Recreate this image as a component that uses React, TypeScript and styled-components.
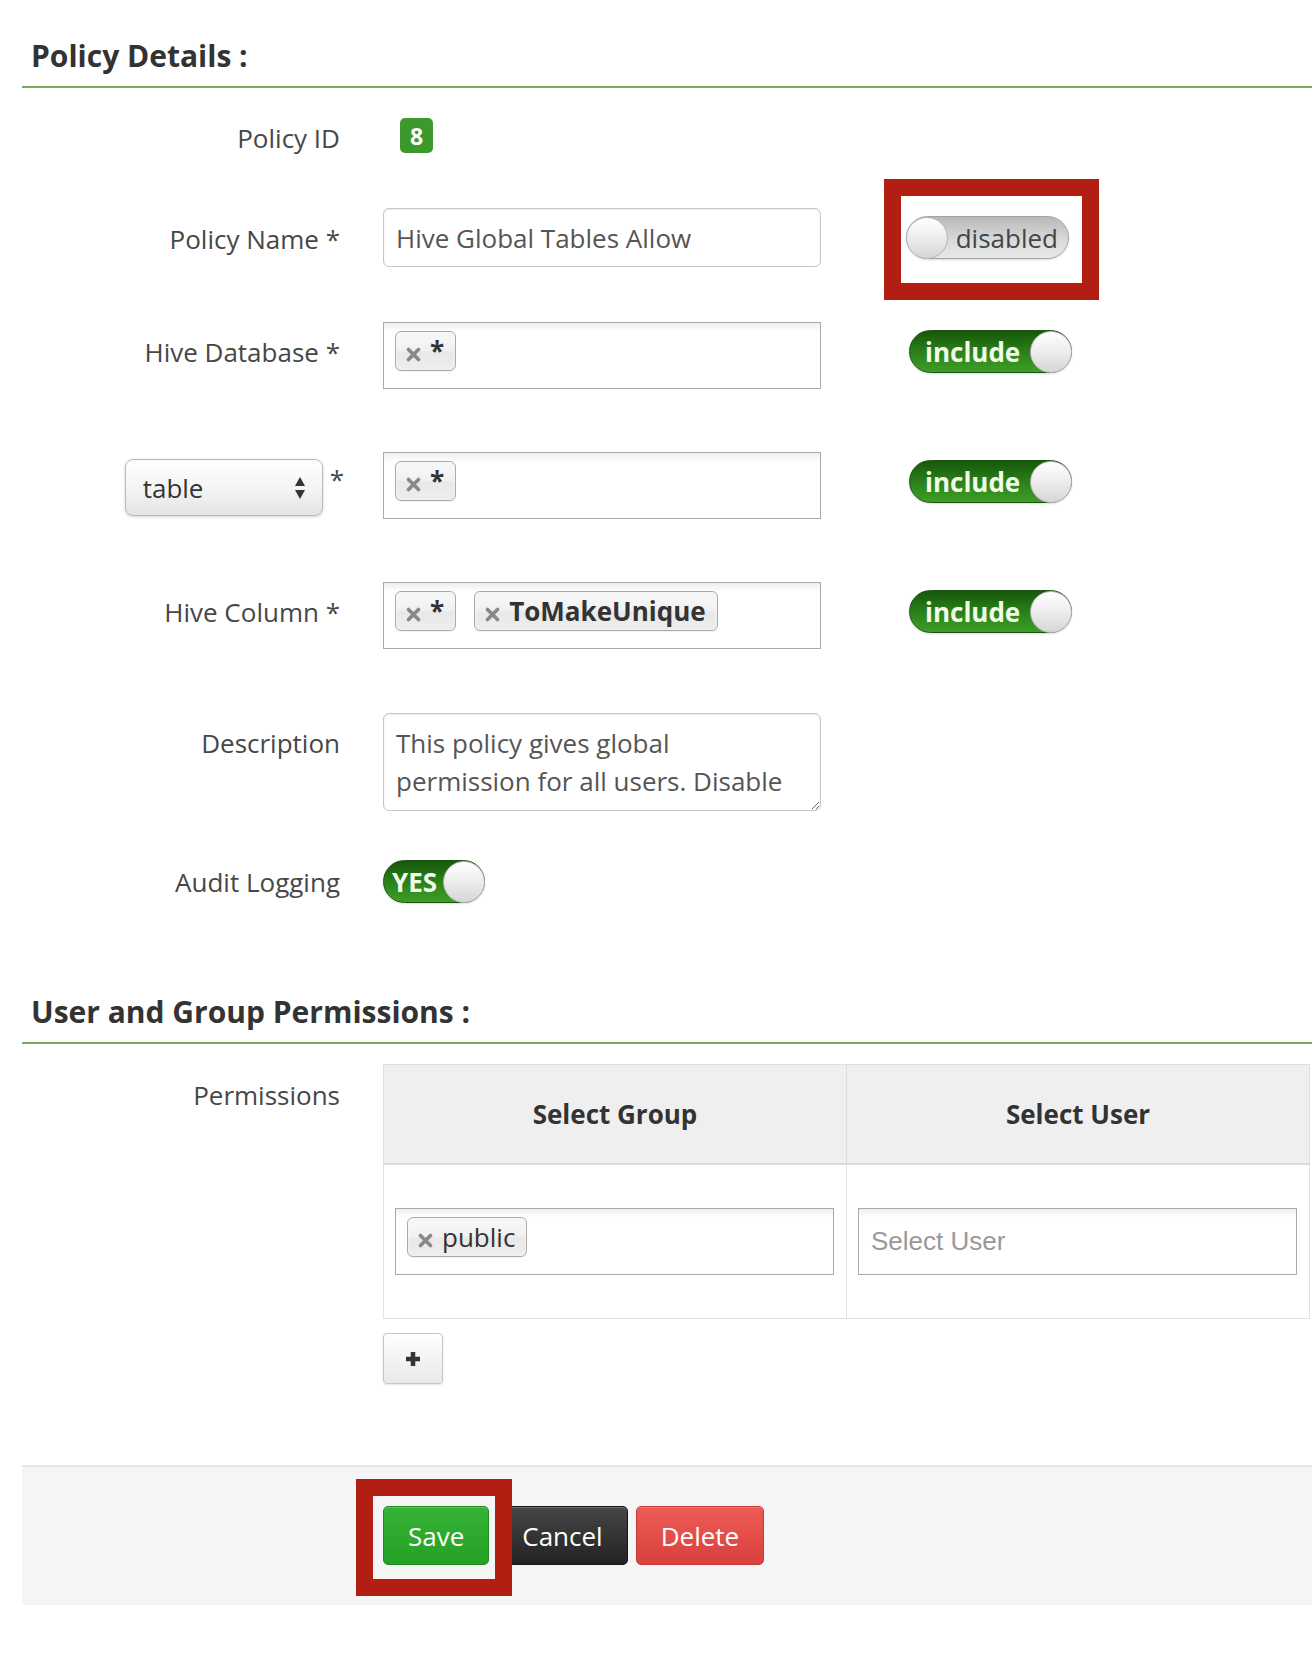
import React from "react";
import styled, { createGlobalStyle } from "styled-components";

const GlobalStyle = createGlobalStyle`
  html, body { margin: 0; padding: 0; background: #fff; }
  body {
    font-family: "Open Sans", "Noto Sans", sans-serif;
    color: #4a4a4a;
    overflow: hidden;
  }
  * { box-sizing: border-box; }
`;

const Page = styled.div`
  width: 1312px;
  min-height: 1658px;
  padding-left: 22px;
  overflow: hidden;
`;

const SectionTitle = styled.h2<{ $top: number }>`
  margin: ${(p) => p.$top}px 0 0;
  padding: 0 0 10px 9px;
  font-size: 30px;
  line-height: 40px;
  font-weight: 700;
  color: #333;
  border-bottom: 2px solid #7aab5c;
`;

const Row = styled.div<{ $mt: number; $center?: boolean }>`
  display: grid;
  grid-template-columns: 318px 438px auto;
  column-gap: 43px;
  margin-top: ${(p) => p.$mt}px;
  align-items: ${(p) => (p.$center ? "center" : "start")};
`;

const WideRow = styled.div<{ $mt: number }>`
  display: grid;
  grid-template-columns: 318px auto;
  column-gap: 43px;
  margin-top: ${(p) => p.$mt}px;
  align-items: start;
`;

const Label = styled.label<{ $pt?: number }>`
  display: block;
  text-align: right;
  font-size: 26px;
  line-height: 40px;
  color: #474747;
  padding-top: ${(p) => (p.$pt === undefined ? 10 : p.$pt)}px;
`;

const LabelCell = styled.div`
  display: flex;
  justify-content: flex-end;
  align-items: flex-start;
  padding-top: 7px;
  margin-right: -4px;
`;

const Star = styled.span`
  font-size: 26px;
  line-height: 40px;
  margin-left: 7px;
  color: #474747;
`;

const Badge = styled.span`
  display: inline-flex;
  align-items: center;
  justify-content: center;
  width: 33px;
  height: 35px;
  margin-left: 17px;
  background: #3c9a2d;
  color: #fff;
  font-weight: 700;
  font-size: 23px;
  border-radius: 5px;
`;

const TextInput = styled.input`
  width: 438px;
  height: 59px;
  border: 1px solid #c6c6c6;
  border-radius: 6px;
  padding: 0 12px;
  font-family: inherit;
  font-size: 26px;
  color: #555;
  background: #fff;
  box-shadow: inset 0 1px 2px rgba(0, 0, 0, 0.08);
  outline: none;
`;

const TagBox = styled.div<{ $w?: number }>`
  width: ${(p) => p.$w ?? 438}px;
  height: 67px;
  border: 1px solid #aaa;
  padding: 8px 11px;
  display: flex;
  gap: 18px;
  align-items: flex-start;
  background: linear-gradient(#eee 0%, #fff 14%);
`;

const Tag = styled.span<{ $bold?: boolean }>`
  display: inline-flex;
  align-items: center;
  height: 40px;
  padding: 0 11px 0 10px;
  gap: 9px;
  border: 1px solid #aaa;
  border-radius: 6px;
  background: linear-gradient(#f6f6f6 20%, #f0f0f0 50%, #e8e8e8 52%, #eee 100%);
  box-shadow: inset 0 0 2px #fff, 0 1px 0 rgba(0, 0, 0, 0.05);
  font-size: 26px;
  font-weight: ${(p) => (p.$bold ? 700 : 400)};
  color: #333;
  line-height: 40px;
`;

const TagX = styled.svg`
  width: 15px;
  height: 15px;
  margin-top: 7px;
  flex: none;
`;

const Placeholder = styled.span`
  font-family: "Liberation Sans", Arial, sans-serif;
  font-size: 26px;
  color: #999;
  line-height: 49px;
  padding-left: 1px;
`;

const ToggleCol = styled.div<{ $shift?: number }>`
  padding-left: ${(p) => 42 + (p.$shift ?? 0)}px;
  padding-top: 8px;
`;

const Annotated = styled.div`
  position: relative;
  display: inline-block;
`;

const RedBox = styled.div<{ $t: number; $l: number; $w: number; $h: number }>`
  position: absolute;
  top: ${(p) => p.$t}px;
  left: ${(p) => p.$l}px;
  width: ${(p) => p.$w}px;
  height: ${(p) => p.$h}px;
  border: 17px solid #b21e12;
  pointer-events: none;
`;

const Toggle = styled.div<{ $on: boolean; $w: number; $pl?: number }>`
  display: flex;
  align-items: center;
  justify-content: space-between;
  width: ${(p) => p.$w}px;
  height: 43px;
  border-radius: 22px;
  padding: ${(p) => (p.$on ? `0 0 0 ${p.$pl ?? 13}px` : "0 10px 0 0")};
  background: ${(p) =>
    p.$on
      ? "linear-gradient(#17570c, #2a8019 50%, #3d9e25)"
      : "linear-gradient(#b9b9b9, #d9d9d9 55%, #e9e9e9)"};
  border: 1px solid ${(p) => (p.$on ? "#1d5414" : "#a3a3a3")};
  box-shadow: 0 1px 2px rgba(0, 0, 0, 0.15);
  font-size: 26px;
  font-weight: ${(p) => (p.$on ? 700 : 400)};
  color: ${(p) => (p.$on ? "#f1fbe9" : "#444")};
  line-height: 1;
`;

const Knob = styled.span`
  width: 42px;
  height: 42px;
  margin: -1px;
  border-radius: 50%;
  background: linear-gradient(#ffffff, #ececec 50%, #d6d6d6);
  border: 1px solid #b5b5b5;
  flex: none;
`;

const Description = styled.textarea`
  width: 438px;
  height: 98px;
  border: 1px solid #c6c6c6;
  border-radius: 6px;
  padding: 10px 12px;
  font-family: inherit;
  font-size: 26px;
  line-height: 38px;
  color: #555;
  overflow: hidden;
  outline: none;
  box-shadow: inset 0 1px 2px rgba(0, 0, 0, 0.08);
`;

const SelectBox = styled.div`
  width: 198px;
  height: 57px;
  border: 1px solid #b9b9b9;
  border-radius: 8px;
  background: linear-gradient(#ffffff, #f3f3f3 55%, #e4e4e4);
  box-shadow: 0 1px 3px rgba(0, 0, 0, 0.18);
  display: flex;
  align-items: center;
  justify-content: space-between;
  padding: 0 16px 0 17px;
  font-size: 26px;
  color: #333;
`;

const Table = styled.table`
  border-collapse: collapse;
  width: 927px;
`;

const Th = styled.th`
  height: 99px;
  width: 50%;
  background: #efefef;
  border: 1px solid #dedede;
  border-bottom: 2px solid #dadada;
  font-size: 26px;
  font-weight: 700;
  color: #333;
  text-align: center;
`;

const Td = styled.td`
  height: 155px;
  border: 1px solid #e2e2e2;
  padding: 0 11px;
  vertical-align: middle;
`;

const AddButton = styled.button`
  display: flex;
  align-items: center;
  justify-content: center;
  width: 60px;
  height: 51px;
  margin-top: 14px;
  border: 1px solid #c6c6c6;
  border-radius: 4px;
  background: linear-gradient(#ffffff, #e8e8e8);
  box-shadow: 0 1px 2px rgba(0, 0, 0, 0.12);
  padding: 0;
`;

const Footer = styled.div`
  margin-top: 81px;
  height: 140px;
  background: #f5f5f5;
  border-top: 2px solid #e6e6e6;
  padding: 39px 0 0 361px;
  display: flex;
  gap: 8px;
  align-items: flex-start;
`;

const Button = styled.button<{ $kind: "save" | "cancel" | "delete" }>`
  height: 59px;
  padding: 0 24px;
  border-radius: 5px;
  font-family: inherit;
  font-size: 26px;
  color: #fff;
  cursor: pointer;
  border: 1px solid
    ${(p) => (p.$kind === "save" ? "#1f8c1f" : p.$kind === "cancel" ? "#151515" : "#c23a36")};
  background: ${(p) =>
    p.$kind === "save"
      ? "linear-gradient(#37b337, #24a024)"
      : p.$kind === "cancel"
      ? "linear-gradient(#464646, #222)"
      : "linear-gradient(#ee5c58, #d8403c)"};
  box-shadow: inset 0 1px 0 rgba(255, 255, 255, 0.2);
`;

const XIcon = () => (
  <TagX viewBox="0 0 15 15">
    <path d="M2.5 2.5 L12.5 12.5 M12.5 2.5 L2.5 12.5" stroke="#888" strokeWidth="3.6" strokeLinecap="round" />
  </TagX>
);

const Arrows = () => (
  <svg width="12" height="24" viewBox="0 0 12 24">
    <path d="M6 1 L11 10 L1 10 Z" fill="#333" />
    <path d="M6 23 L11 14 L1 14 Z" fill="#333" />
  </svg>
);

const PlusIcon = () => (
  <svg width="18" height="18" viewBox="0 0 18 18">
    <path d="M9 2 V16 M2 9 H16" stroke="#333" strokeWidth="4.5" />
  </svg>
);

const IncludeToggle = () => (
  <Toggle $on $w={163} $pl={15}>
    include
    <Knob />
  </Toggle>
);

export default function App() {
  return (
    <>
      <GlobalStyle />
      <Page>
        <SectionTitle $top={36}>Policy Details :</SectionTitle>

        <Row $mt={30}>
          <Label $pt={0}>Policy ID</Label>
          <div>
            <Badge>8</Badge>
          </div>
        </Row>

        <Row $mt={50}>
          <Label $pt={11}>Policy Name *</Label>
          <TextInput defaultValue="Hive Global Tables Allow" readOnly />
          <ToggleCol>
            <Annotated>
              <Toggle $on={false} $w={163}>
                <Knob />
                disabled
              </Toggle>
              <RedBox $t={-37} $l={-22} $w={215} $h={121} />
            </Annotated>
          </ToggleCol>
        </Row>

        <Row $mt={55}>
          <Label>Hive Database *</Label>
          <TagBox>
            <Tag $bold>
              <XIcon />*
            </Tag>
          </TagBox>
          <ToggleCol $shift={3}>
            <IncludeToggle />
          </ToggleCol>
        </Row>

        <Row $mt={63}>
          <LabelCell>
            <SelectBox>
              table
              <Arrows />
            </SelectBox>
            <Star>*</Star>
          </LabelCell>
          <TagBox>
            <Tag $bold>
              <XIcon />*
            </Tag>
          </TagBox>
          <ToggleCol $shift={3}>
            <IncludeToggle />
          </ToggleCol>
        </Row>

        <Row $mt={63}>
          <Label>Hive Column *</Label>
          <TagBox>
            <Tag $bold>
              <XIcon />*
            </Tag>
            <Tag $bold>
              <XIcon />
              ToMakeUnique
            </Tag>
          </TagBox>
          <ToggleCol $shift={3}>
            <IncludeToggle />
          </ToggleCol>
        </Row>

        <Row $mt={64}>
          <Label>Description</Label>
          <Description
            readOnly
            defaultValue={"This policy gives global permission for all users. Disable"}
          />
        </Row>

        <Row $mt={49} $center>
          <Label $pt={0}>Audit Logging</Label>
          <div>
            <Toggle $on $w={102} $pl={8}>
              YES
              <Knob />
            </Toggle>
          </div>
        </Row>

        <SectionTitle $top={89}>User and Group Permissions :</SectionTitle>

        <WideRow $mt={20}>
          <Label $pt={11}>Permissions</Label>
          <div>
            <Table>
              <thead>
                <tr>
                  <Th>Select Group</Th>
                  <Th>Select User</Th>
                </tr>
              </thead>
              <tbody>
                <tr>
                  <Td>
                    <TagBox $w={439}>
                      <Tag>
                        <XIcon />
                        public
                      </Tag>
                    </TagBox>
                  </Td>
                  <Td>
                    <TagBox $w={439}>
                      <Placeholder>Select User</Placeholder>
                    </TagBox>
                  </Td>
                </tr>
              </tbody>
            </Table>
            <AddButton>
              <PlusIcon />
            </AddButton>
          </div>
        </WideRow>

        <Footer>
          <Annotated>
            <Button $kind="save">Save</Button>
            <RedBox $t={-27} $l={-27} $w={156} $h={117} />
          </Annotated>
          <Button $kind="cancel">Cancel</Button>
          <Button $kind="delete">Delete</Button>
        </Footer>
      </Page>
    </>
  );
}
